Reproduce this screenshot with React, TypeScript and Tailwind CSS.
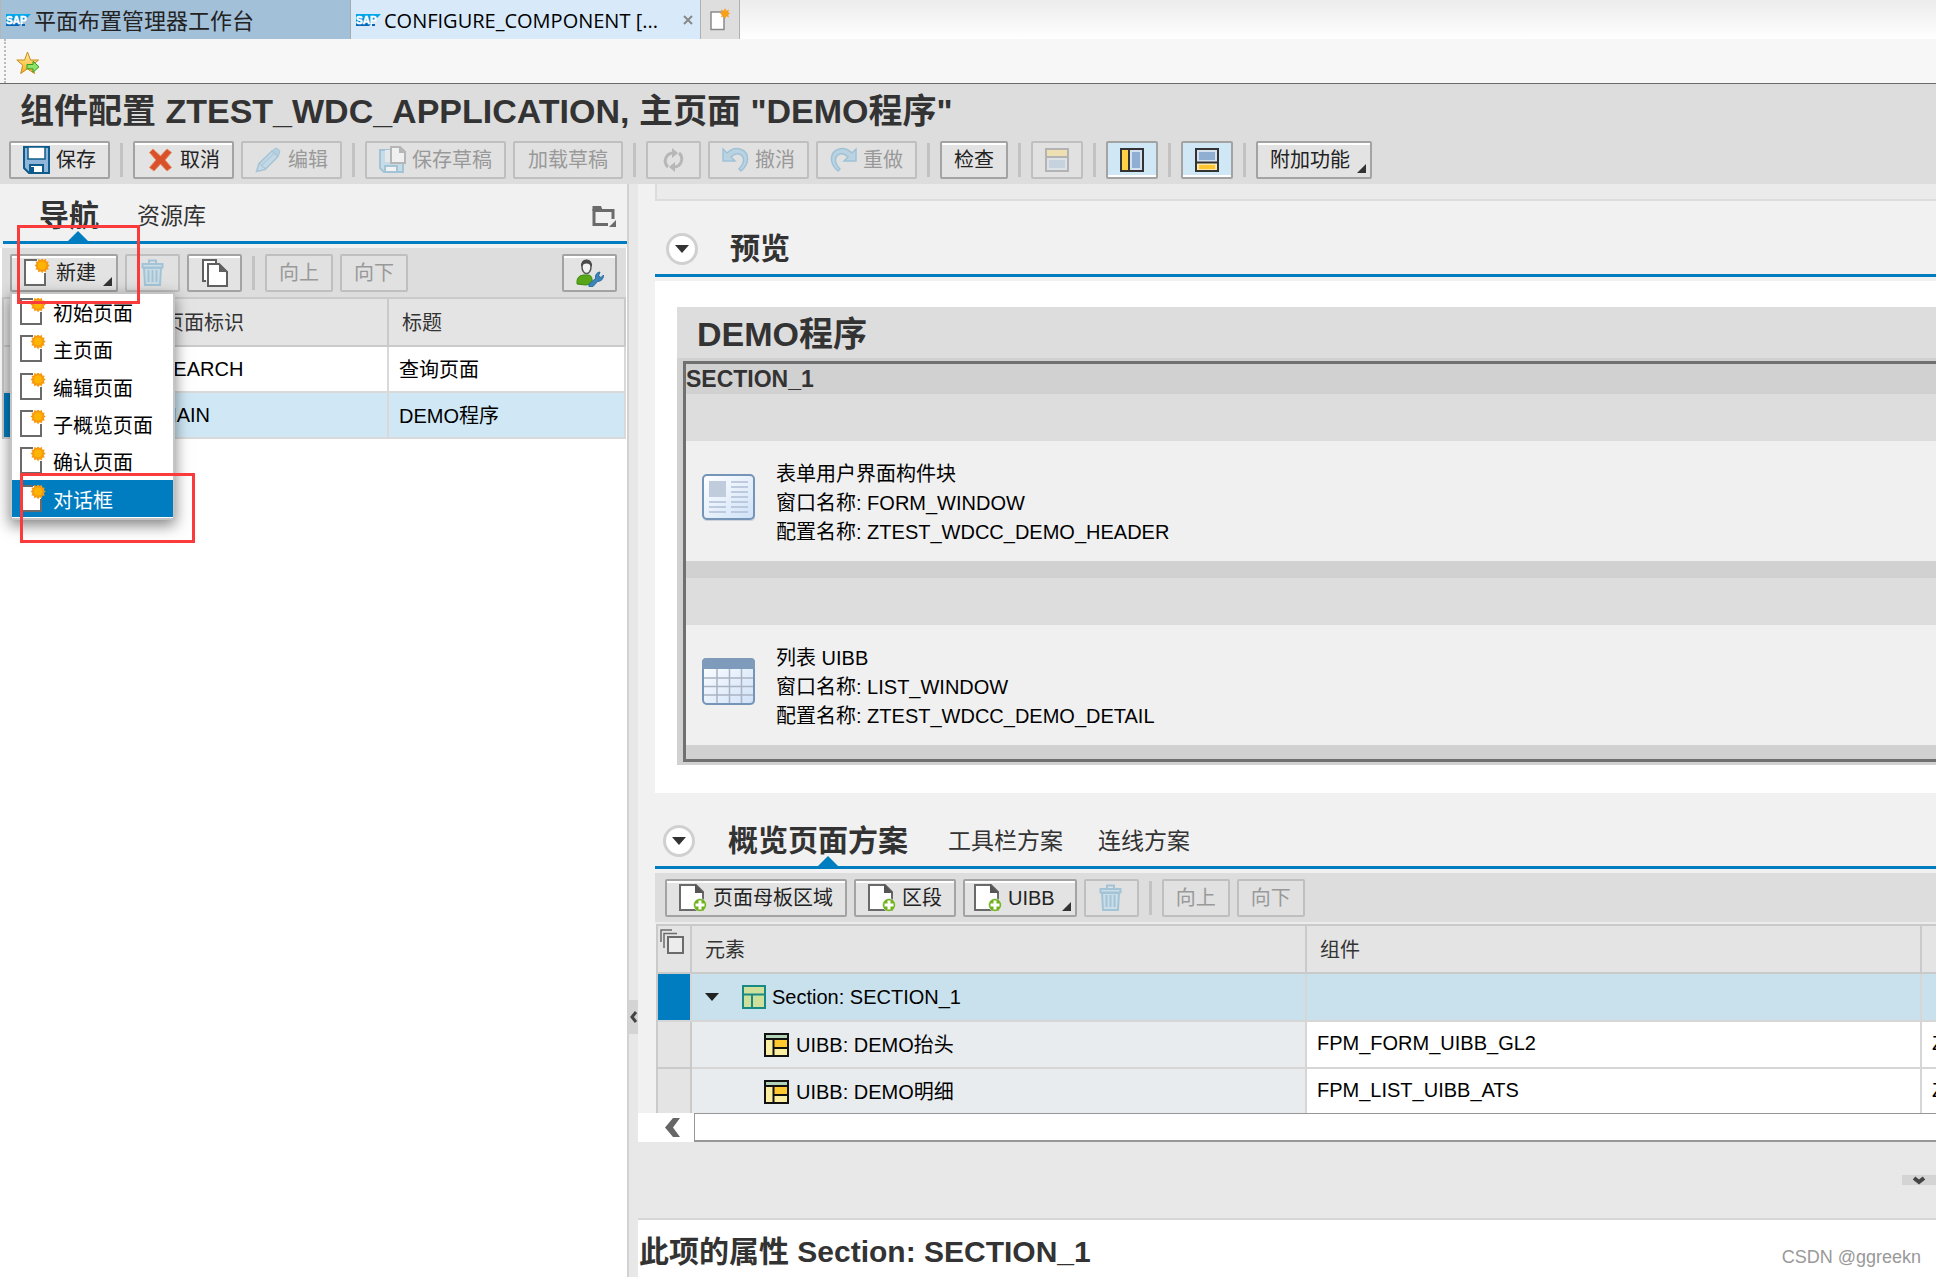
import type { ReactNode } from 'react'
import clsx from 'clsx'

type IconProps = { className?: string }

function SapLogo() {
  return (
    <svg width="25" height="12" viewBox="0 0 25 12" className="shrink-0">
      <defs>
        <linearGradient id="sap" x1="0" y1="0" x2="0" y2="1">
          <stop offset="0" stopColor="#00aeef" />
          <stop offset="1" stopColor="#0a62b5" />
        </linearGradient>
      </defs>
      <path d="M0 0h25L13 12H0z" fill="url(#sap)" />
      <text
        x="0"
        y="10"
        fontSize="10"
        fontWeight="bold"
        fontFamily="Liberation Sans"
        fill="#fff"
        stroke="#fff"
        strokeWidth=".6"
      >
        SAP
      </text>
      <path d="M16 10h3v2h-3z" fill="#0a62b5" />
    </svg>
  )
}

function Spark() {
  return (
    <>
      <path
        d="M18 0l1.600 2 2.400-1 .4 2.600 2.600.4-1 2.400 2 1.600-2 1.600 1 2.400-2.600.4-.4 2.600-2.400-1-1.600 2-1.600-2-2.400 1-.4-2.600-2.600-.4 1-2.400-2-1.600 2-1.600-1-2.400 2.600-.4.4-2.600 2.400 1z"
        fill="#f59a12"
        transform="translate(1 -1) scale(.95)"
      />
      <circle cx="18" cy="6.500" r="4" fill="#ffb400" />
    </>
  )
}

function NewDocIcon({ className }: IconProps) {
  return (
    <svg width="26" height="28" viewBox="0 0 26 28" className={className}>
      <path d="M1 1h20v25H1z" fill="#fff" />
      <path d="M13 1H1v25h20V14" fill="none" stroke="#6a6a6a" strokeWidth="2" />
      <Spark />
    </svg>
  )
}

function NewTabIcon() {
  return (
    <svg width="20" height="23" viewBox="0 0 20 23">
      <path d="M1 4h13v17.500H1z" fill="#fff" stroke="#8a8a8a" strokeWidth="1.500" />
      <path
        d="M15 0l1.300 2.700L19 1.500l-.8 2.700L20 5.500l-1.800 1.300.8 2.700-2.700-1.200L15 11l-1.300-2.700L11 9.500l.8-2.700L10 5.500l1.800-1.300L11 1.500l2.700 1.200z"
        fill="#f7a01b"
      />
    </svg>
  )
}

function StarIcon() {
  return (
    <svg width="24" height="24" viewBox="0 0 24 24">
      <defs>
        <linearGradient id="star" x1="0" y1="0" x2="0" y2="1">
          <stop offset="0" stopColor="#fff0a0" />
          <stop offset="1" stopColor="#f5ae1c" />
        </linearGradient>
      </defs>
      <path
        d="M11.500 1l3 8H22.500l-6.200 5.300 2.200 8.200-7-4.700-6.800 4.700 2-8.200L.8 9h7.800z"
        fill="url(#star)"
        stroke="#c98a1e"
        strokeLinejoin="round"
      />
      <path d="M11 13.500h6v-3.200l6 5.500-6 5.500v-3.500h-6z" fill="#8fe36a" stroke="#2f9e1f" />
    </svg>
  )
}

function SaveIcon() {
  return (
    <svg width="27" height="28" viewBox="0 0 27 28">
      <path d="M1 1h25v26H6l-5-5z" fill="#8fb5d8" stroke="#0f5c8c" strokeWidth="2" />
      <path d="M5 1h17v12H5z" fill="#fff" stroke="#0f5c8c" strokeWidth="1.500" />
      <path d="M7 19h13v8H7z" fill="#fff" stroke="#0f5c8c" strokeWidth="2" />
      <path d="M7 21h4v6H7z" fill="#0f5c8c" />
    </svg>
  )
}

function SaveDraftIcon() {
  return (
    <svg width="27" height="28" viewBox="0 0 27 28">
      <path d="M1 4h23v22H5l-4-4z" fill="#c6dbe6" stroke="#a3c3d6" strokeWidth="2" />
      <path d="M6 4h14v12H6z" fill="#e4e8ea" />
      <path d="M6 20h12v6H6z" fill="#f2f2f2" stroke="#a3c3d6" strokeWidth="2" />
      <path d="M12 1h9l5 5v11H12z" fill="#f0f0f0" stroke="#b5b5b5" strokeWidth="2" />
      <path d="M20 1v6h6z" fill="#b5b5b5" />
    </svg>
  )
}

function CancelIcon() {
  return (
    <svg width="27" height="26" viewBox="0 0 27 26">
      <path
        d="M6 2l7.500 7L20 2l4.500 3.500-6.500 7.500 6.500 7.500L20 24l-6.500-7L7 24l-4.500-3.500L9 13 2.500 5.500z"
        fill="#d9502a"
        stroke="#e38a60"
        strokeWidth="1"
      />
    </svg>
  )
}

function PencilIcon() {
  return (
    <svg width="27" height="26" viewBox="0 0 27 26">
      <path d="M1.500 24.500l2.500-8L17 4l6 5.500-13 13z" fill="#c3d9e5" stroke="#a6c4d6" strokeWidth="1.500" />
      <path d="M17 4l2.500-2.300q2-1.200 4 .6t1 4L23 9.500z" fill="#b4cfde" stroke="#a6c4d6" />
      <path d="M4 16.500q3 .5 3 3 3 0 3 3" fill="none" stroke="#a6c4d6" />
      <path d="M7 18L19 6.500" stroke="#b4cfde" strokeWidth="2" />
    </svg>
  )
}

function RefreshIcon() {
  return (
    <svg width="27" height="26" viewBox="0 0 27 26" fill="none" stroke="#b7b7b7" strokeWidth="3">
      <path d="M8 20a8 8 0 0 1 5-14" />
      <path d="M19 6a8 8 0 0 1-5 14" />
      <path d="M12 1l6 5-6 5z" fill="#b7b7b7" stroke="none" />
      <path d="M15 15l-6 5 6 5z" fill="#b7b7b7" stroke="none" />
    </svg>
  )
}

function UndoIcon({ className }: IconProps) {
  return (
    <svg width="27" height="26" viewBox="0 0 27 26" className={className}>
      <path
        d="M1 2v12h12l-4-4q4-4 8-3 5 1.500 4.500 7-.5 4-4.500 8l2 2q6-5 6.500-11Q26 4 18 2 11 0 5 6z"
        fill="#b9d3e2"
        stroke="#a0c2d6"
        strokeWidth="1.500"
      />
    </svg>
  )
}

function TrashIcon() {
  return (
    <svg width="24" height="28" viewBox="0 0 24 28" fill="#cbdde6" stroke="#a3c4d7" strokeWidth="2">
      <path d="M8 5V1.500h7V5" fill="none" />
      <path d="M1.500 5h20v3.500h-20z" />
      <path d="M3 9h17l-1 17H4z" />
      <path d="M7.500 11v12M11.500 11v12M15.500 11v12" fill="none" />
    </svg>
  )
}

function CopyIcon() {
  return (
    <svg width="26" height="28" viewBox="0 0 26 28" fill="#fff" stroke="#5f5f5f" strokeWidth="2">
      <path d="M4 22H1V1h13v3" />
      <path d="M6 5h11l8 8v14H6z" />
      <path d="M17 4v9h9z" fill="#5f5f5f" stroke="none" />
    </svg>
  )
}

function PersonIcon() {
  return (
    <svg width="28" height="28" viewBox="0 0 28 28">
      <path d="M1 25q-1-8 6-9h6q4 1 3 9-6 2-15 0z" fill="#58a618" stroke="#3f8a10" />
      <ellipse cx="10.500" cy="8" rx="4.500" ry="6.500" fill="#f2f2f2" stroke="#555" strokeWidth="1.500" />
      <path d="M5 8q-.5-7.500 5.500-7.500T16 8q-2-3.500-5.500-3.500T5 8z" fill="#4a4a4a" />
      <path
        d="M13 25l6.500-5.500q-.5-6 4.500-6.500l-1.500 4 2.500 1.500 2.500-2.500q0 6-6 6.500L17 27.500l-4 .2z"
        fill="#3d84b8"
        stroke="#2a6da0"
      />
    </svg>
  )
}

function FolderIcon() {
  return (
    <svg width="25" height="23" viewBox="0 0 25 23">
      <path d="M16 19.500H2V5.500h19V14" fill="none" stroke="#6b6b6b" strokeWidth="3" />
      <path d="M.5 1H9l2 5H.5z" fill="#6b6b6b" />
      <path d="M24 15v7h-7z" fill="#6b6b6b" />
    </svg>
  )
}

function AddDocIcon() {
  return (
    <svg width="28" height="28" viewBox="0 0 28 28">
      <path d="M1 1h16l7 7v18H1z" fill="#fff" stroke="#6a6a6a" strokeWidth="2" />
      <path d="M16 0v9h9z" fill="#555" />
      <circle cx="21" cy="21" r="6.500" fill="#6fb01c" stroke="#fff" strokeWidth=".5" />
      <path d="M21 16.500v9M16.500 21h9" stroke="#fff" strokeWidth="3" />
    </svg>
  )
}

function SplitIcon({ variant }: { variant: 'rows' | 'columns' | 'bottom' }) {
  if (variant === 'columns') {
    return (
      <svg width="24" height="24" viewBox="0 0 24 24" stroke="#333" strokeWidth="2">
        <path d="M1 1h22v22H1z" fill="#d5e1ef" />
        <path d="M1 1h8v22H1z" fill="#ffcf45" />
        <path d="M12 4h8v16h-8z" fill="#8faed1" stroke="none" />
      </svg>
    )
  }
  if (variant === 'bottom') {
    return (
      <svg width="24" height="24" viewBox="0 0 24 24" stroke="#333" strokeWidth="2">
        <path d="M1 1h22v22H1z" fill="#d5e1ef" />
        <path d="M4 4h16v8H4z" fill="#8faed1" stroke="none" />
        <path d="M1 14.500h22V23H1z" fill="#ffe9a8" />
        <path d="M4 17h16v4H4z" fill="#ffc52e" stroke="none" />
      </svg>
    )
  }
  return (
    <svg width="24" height="24" viewBox="0 0 24 24" stroke="#b3b3b3" strokeWidth="2">
      <path d="M1 1h22v22H1z" fill="#dde2e7" />
      <path d="M1 1h22v8H1z" fill="#efe0b4" />
      <path d="M4 12h16v8H4z" fill="#c6d2de" stroke="none" />
    </svg>
  )
}

function FormIcon() {
  return (
    <svg width="54" height="48" viewBox="0 0 54 48">
      <defs>
        <linearGradient id="sheet" x1="0" y1="0" x2="1" y2="1">
          <stop offset="0" stopColor="#fff" />
          <stop offset="1" stopColor="#cfe1f8" />
        </linearGradient>
      </defs>
      <rect x="1" y="3" width="52" height="44" rx="4" fill="#cfd3d8" />
      <rect x="1" y="1" width="51" height="44" rx="4" fill="url(#sheet)" stroke="#7494b8" strokeWidth="2" />
      <path d="M7 7h17v16H7z" fill="#c0cbdc" />
      <path
        d="M29 8h17M29 13h17M29 18h17M29 23h17M29 28h17M29 33h17M29 38h17M7 28h17M7 33h17M7 38h17"
        stroke="#b0bfd4"
        strokeWidth="1.500"
      />
    </svg>
  )
}

function GridIcon() {
  return (
    <svg width="54" height="48" viewBox="0 0 54 48">
      <rect x="1" y="3" width="52" height="44" rx="4" fill="#cfd3d8" />
      <rect x="1" y="1" width="51" height="45" rx="4" fill="url(#sheet)" stroke="#7494b8" strokeWidth="2" />
      <path d="M0 11V4q0-4 4-4h45q4 0 4 4v7z" fill="#7f9bbb" />
      <path d="M2 20h49M2 28.500h49M2 37h49M15 11v34M27.500 11v34M39.500 11v34" stroke="#a9b3c2" strokeWidth="1.500" />
    </svg>
  )
}

function SectionIcon() {
  return (
    <svg width="24" height="24" viewBox="0 0 24 24" className="shrink-0">
      <path d="M1 1h22v22H1zM1 9.500h22M10 9.500V23" fill="#cfe09c" stroke="#178a84" strokeWidth="2" />
    </svg>
  )
}

function UibbIcon() {
  return (
    <svg width="25" height="24" viewBox="0 0 25 24" className="shrink-0">
      <path d="M1 1h23v22H1z" fill="#fbeea0" stroke="#111" strokeWidth="2" />
      <path d="M2 2h21v3H2z" fill="#b3d3b8" />
      <path d="M10 7h13v7H10z" fill="#ffc82e" />
      <path d="M1 6h23M9.500 6v17M9.500 15H24" stroke="#111" strokeWidth="2" />
    </svg>
  )
}

function SelectAllIcon() {
  return (
    <svg width="25" height="25" viewBox="0 0 25 25" fill="none" stroke="#6b6b6b" strokeWidth="2">
      <path d="M8 8h15v16H8z" fill="#ececec" />
      <path d="M4 19V4.500h13" strokeWidth="1.500" />
      <path d="M1 13V1h11" strokeWidth="1.500" />
    </svg>
  )
}

function ToggleButton({ label }: { label: string }) {
  return (
    <button
      aria-label={label}
      className="flex size-8 items-center justify-center rounded-full border-3 border-[#d0d0d0] bg-white"
    >
      <svg width="14" height="8" viewBox="0 0 14 8">
        <path d="M0 0h14L7 8z" fill="#333" />
      </svg>
    </button>
  )
}

type ToolButtonProps = {
  children: ReactNode
  disabled?: boolean
  active?: boolean
  menu?: boolean
  label?: string
  className?: string
}

function ToolButton({ children, disabled, active, menu, label, className }: ToolButtonProps) {
  return (
    <button
      disabled={disabled}
      aria-label={label}
      className={clsx(
        'relative flex h-[38px] shrink-0 items-center justify-center gap-[6px] rounded-xs border-2 whitespace-nowrap',
        disabled
          ? 'border-[#bfbfbf] bg-[#e1e1e1] text-[#999]'
          : 'border-[#a3a3a3] text-[#222]',
        !disabled && !active && 'bg-[#e3e3e3] shadow-[inset_0_2px_0_#fff]',
        active && 'bg-[#d0e8f5] shadow-[inset_0_-2px_0_#fff]',
        className ?? 'px-3',
      )}
    >
      {children}
      {menu && (
        <svg width="9" height="9" viewBox="0 0 9 9" className="absolute right-1 bottom-1">
          <path d="M9 0v9H0z" fill="#333" />
        </svg>
      )}
    </button>
  )
}

function Separator() {
  return <span className="mx-[3px] h-[34px] w-[3px] shrink-0 bg-[#c2c2c2]" />
}

function TabPointer() {
  return (
    <svg width="20" height="10" viewBox="0 0 20 10" className="absolute bottom-0 left-1/2 -translate-x-1/2">
      <path d="M10 0l10 10H0z" fill="#007cc0" />
    </svg>
  )
}

const menuItems = ['初始页面', '主页面', '编辑页面', '子概览页面', '确认页面', '对话框']

function NewMenu() {
  return (
    <ul
      role="menu"
      className="absolute top-[38px] left-0 z-10 flex h-[228px] w-[165px] flex-col border-2 border-[#c4c4c4] bg-white text-black shadow-[0_5px_14px_rgba(0,0,0,0.5)]"
    >
      {menuItems.map((item, i) => (
        <li key={item} role="none" className="flex flex-1">
          <button
            role="menuitem"
            className={clsx(
              'flex flex-1 items-center gap-[7px] pl-2 text-left',
              i === menuItems.length - 1 && 'bg-[#007cc0] text-white',
            )}
          >
            <NewDocIcon />
            <span className="pt-1">{item}</span>
          </button>
        </li>
      ))}
    </ul>
  )
}

function BrowserTabs() {
  return (
    <div className="flex h-[39px] bg-linear-to-b from-[#ececec] to-white font-['Open_Sans','Noto_Sans_CJK_SC',sans-serif] text-[20px]">
      <button className="flex w-[350px] items-center gap-[3px] border-l border-[#b5b5b5] bg-[#a3c0d9] pl-[5px] text-[22px] text-[#222]">
        <SapLogo />
        <span>平面布置管理器工作台</span>
      </button>
      <div className="flex w-[350px] items-center border-l border-[#aaa] bg-[#d8eafa]">
        <button className="flex items-center gap-[3px] pl-[5px] text-black">
          <SapLogo />
          <span className="pt-[2px] whitespace-nowrap">CONFIGURE_COMPONENT [...</span>
        </button>
        <button aria-label="关闭" className="mr-[7px] ml-auto">
          <svg width="10" height="10" viewBox="0 0 10 10">
            <path d="M1 1l8 8M9 1L1 9" stroke="#888" strokeWidth="2" />
          </svg>
        </button>
      </div>
      <button aria-label="新标签页" className="flex w-[40px] items-center justify-center border-x border-[#b0b0b0] bg-[#dedede]">
        <NewTabIcon />
      </button>
    </div>
  )
}

function AppHeader() {
  return (
    <header className="border-t border-[#6a6a6a] bg-[#ddd] pb-[5px]">
      <h1 className="flex h-[57px] items-center pb-1 pl-5 text-[34px] leading-none font-bold whitespace-nowrap">
        组件配置 ZTEST_WDC_APPLICATION, 主页面 "DEMO程序"
      </h1>
      <div className="flex items-center gap-[7px] pl-[9px]">
        <ToolButton>
          <SaveIcon />
          保存
        </ToolButton>
        <Separator />
        <ToolButton>
          <CancelIcon />
          取消
        </ToolButton>
        <ToolButton disabled>
          <PencilIcon />
          编辑
        </ToolButton>
        <Separator />
        <ToolButton disabled>
          <SaveDraftIcon />
          保存草稿
        </ToolButton>
        <ToolButton disabled className="px-[13px]">
          加载草稿
        </ToolButton>
        <Separator />
        <ToolButton disabled label="刷新" className="w-[55px]">
          <RefreshIcon />
        </ToolButton>
        <ToolButton disabled>
          <UndoIcon />
          撤消
        </ToolButton>
        <ToolButton disabled>
          <UndoIcon className="-scale-x-100" />
          重做
        </ToolButton>
        <Separator />
        <ToolButton>检查</ToolButton>
        <Separator />
        <ToolButton disabled label="上方面板">
          <SplitIcon variant="rows" />
        </ToolButton>
        <Separator />
        <ToolButton active label="左侧面板">
          <SplitIcon variant="columns" />
        </ToolButton>
        <Separator />
        <ToolButton active label="下方面板">
          <SplitIcon variant="bottom" />
        </ToolButton>
        <Separator />
        <ToolButton menu className="pr-5 pl-3">
          附加功能
        </ToolButton>
      </div>
    </header>
  )
}

const pages = [
  { id: 'SEARCH', title: '查询页面', selected: false },
  { id: 'MAIN', title: 'DEMO程序', selected: true },
]

function NavigationPanel() {
  return (
    <aside className="relative w-[629px] shrink-0 border-r-2 border-[#d2d2d2] bg-white">
      <div className="bg-[#f1f1f1] pb-1 pl-[3px]">
        <div className="flex h-[60px] items-center border-b-3 border-[#007cc0] pr-[10px] pl-9">
          <button className="relative flex h-full items-center pt-[6px] text-[30px] font-bold">
            导航
            <span className="absolute inset-x-0 bottom-0 ml-[18px]">
              <TabPointer />
            </span>
          </button>
          <button className="ml-[38px] pt-[6px] text-[23px]">资源库</button>
          <button aria-label="面板选项" className="ml-auto pt-2">
            <FolderIcon />
          </button>
        </div>
      </div>
      <div className="mr-px ml-[2px]">
        <div className="flex h-[49px] items-center gap-[7px] bg-[#ddd] pr-[9px] pl-2">
          <div className="relative">
            <ToolButton menu className="pr-5 pl-3">
              <NewDocIcon />
              新建
            </ToolButton>
            <NewMenu />
          </div>
          <ToolButton disabled label="删除" className="w-[55px]">
            <TrashIcon />
          </ToolButton>
          <ToolButton label="复制" className="w-[55px]">
            <CopyIcon />
          </ToolButton>
          <Separator />
          <ToolButton disabled>向上</ToolButton>
          <ToolButton disabled>向下</ToolButton>
          <ToolButton label="个性化" className="ml-auto w-[55px]">
            <PersonIcon />
          </ToolButton>
        </div>
        <table className="w-full table-fixed border-separate border-spacing-0 border-t-2 border-l-2 border-[#cacaca]">
          <colgroup>
            <col className="w-[146px]" />
            <col className="w-[239px]" />
            <col />
          </colgroup>
          <thead>
            <tr className="h-[48px] bg-[#e4e4e4] text-left">
              <th className="border-b-2 border-[#cacaca]" />
              <th className="border-r-2 border-b-2 border-[#cacaca] pt-[2px] pl-[14px] font-normal">页面标识</th>
              <th className="border-r-2 border-b-2 border-[#cacaca] pt-[2px] pl-[13px] font-normal">标题</th>
            </tr>
          </thead>
          <tbody className="text-black">
            {pages.map(page => (
              <tr key={page.id} className={clsx('h-[46px]', page.selected ? 'bg-[#d0e8f5]' : 'bg-white')}>
                <td className={clsx('border-b-2 border-[#d9d9d9]', page.selected ? 'bg-[#007cc0]' : 'bg-[#e4e4e4]')} />
                <td className="border-r-2 border-b-2 border-[#d9d9d9] pl-[10px]">{page.id}</td>
                <td className="border-r-2 border-b-2 border-[#d9d9d9] pt-[2px] pl-[10px]">{page.title}</td>
              </tr>
            ))}
          </tbody>
        </table>
      </div>
      <div className="absolute top-[41px] left-[17px] z-20 h-[79px] w-[123px] border-3 border-[#fb3b3b]" />
      <div className="absolute top-[289px] left-[20px] z-20 h-[70px] w-[175px] border-3 border-[#fb3b3b]" />
    </aside>
  )
}

function PreviewBlock({ icon, lines }: { icon: ReactNode; lines: string[] }) {
  return (
    <>
      <div className="h-[47px] bg-[#ddd]" />
      <div className="flex h-[120px] items-center gap-5 bg-[#f0f0f0] pl-4">
        <div className="pb-[6px]">{icon}</div>
        <div className="pt-1 leading-[29px] text-black">
          {lines.map(line => (
            <p key={line}>{line}</p>
          ))}
        </div>
      </div>
    </>
  )
}

function Preview() {
  return (
    <section className="pl-[17px]">
      <div className="flex h-[76px] items-center gap-8 border-b-3 border-[#007cc0] pt-[23px] pl-[11px]">
        <ToggleButton label="折叠预览" />
        <h2 className="text-[30px] leading-none font-bold">预览</h2>
      </div>
      <div className="mt-1 bg-white pt-[26px] pb-7 pl-[22px]">
        <h3 className="flex h-[51px] items-center bg-[#ddd] pt-[2px] pl-5 text-[34px] leading-none font-bold">DEMO程序</h3>
        <div className="bg-[#d1d1d1] py-[3px] pl-[6px]">
          <div className="border-y-3 border-l-3 border-[#707070]">
            <h4 className="flex h-[30px] items-center text-[23px] leading-none font-bold">
              <span>SECTION_1</span>
            </h4>
            <PreviewBlock
              icon={<FormIcon />}
              lines={['表单用户界面构件块', '窗口名称: FORM_WINDOW', '配置名称: ZTEST_WDCC_DEMO_HEADER']}
            />
            <div className="h-[17px]" />
            <PreviewBlock
              icon={<GridIcon />}
              lines={['列表 UIBB', '窗口名称: LIST_WINDOW', '配置名称: ZTEST_WDCC_DEMO_DETAIL']}
            />
            <div className="h-[14px]" />
          </div>
        </div>
      </div>
    </section>
  )
}

const uibbs = [
  { name: 'UIBB: DEMO抬头', component: 'FPM_FORM_UIBB_GL2' },
  { name: 'UIBB: DEMO明细', component: 'FPM_LIST_UIBB_ATS' },
]

function OverviewSchema() {
  return (
    <section className="pl-[17px]">
      <div className="flex h-[76px] items-center border-b-3 border-[#007cc0] pt-[23px] pl-[8px]">
        <ToggleButton label="折叠方案" />
        <button className="relative ml-[33px] flex h-full items-center text-[30px] font-bold whitespace-nowrap">
          概览页面方案
          <span className="absolute inset-x-0 bottom-0 ml-[20px]">
            <TabPointer />
          </span>
        </button>
        <button className="ml-10 text-[23px] whitespace-nowrap">工具栏方案</button>
        <button className="ml-[35px] text-[23px] whitespace-nowrap">连线方案</button>
      </div>
      <div className="mt-1 flex h-[51px] items-center gap-[7px] border-b-2 border-[#ececec] bg-[#ddd] pl-[10px]">
        <ToolButton>
          <AddDocIcon />
          页面母板区域
        </ToolButton>
        <ToolButton>
          <AddDocIcon />
          区段
        </ToolButton>
        <ToolButton menu className="pr-5 pl-[9px]">
          <AddDocIcon />
          UIBB
        </ToolButton>
        <ToolButton disabled label="删除" className="w-[55px]">
          <TrashIcon />
        </ToolButton>
        <Separator />
        <ToolButton disabled>向上</ToolButton>
        <ToolButton disabled>向下</ToolButton>
      </div>
      <div className="h-[189px] overflow-hidden pl-px">
        <table className="w-full table-fixed border-separate border-spacing-0 border-t-2 border-l-2 border-[#cacaca]">
          <colgroup>
            <col className="w-[34px]" />
            <col className="w-[615px]" />
            <col className="w-[615px]" />
            <col />
          </colgroup>
          <thead>
            <tr className="h-[48px] bg-[#e4e4e4] text-left">
              <th className="border-r-2 border-b-2 border-[#cacaca] pt-[3px] pl-[2px] align-top">
                <SelectAllIcon />
              </th>
              <th className="border-r-2 border-b-2 border-[#cacaca] pt-[2px] pl-[13px] font-normal">元素</th>
              <th className="border-r-2 border-b-2 border-[#cacaca] pt-[2px] pl-[13px] font-normal">组件</th>
              <th className="border-b-2 border-[#cacaca]" />
            </tr>
          </thead>
          <tbody className="text-black">
            <tr className="h-[48px] bg-[#c9e0ed]">
              <td className="border-r-2 border-b-2 border-[#d6d6d6] bg-[#007cc0]" />
              <td className="border-r-2 border-b-2 border-[#d6d6d6] pl-[13px]">
                <div className="flex items-center">
                  <button aria-label="展开">
                    <svg width="14" height="8" viewBox="0 0 14 8">
                      <path d="M0 0h14L7 8z" fill="#222" />
                    </svg>
                  </button>
                  <span className="ml-[23px] flex items-center gap-[6px]">
                    <SectionIcon />
                    Section: SECTION_1
                  </span>
                </div>
              </td>
              <td className="border-r-2 border-b-2 border-[#d6d6d6]" />
              <td className="border-b-2 border-[#d6d6d6]" />
            </tr>
            {uibbs.map(uibb => (
              <tr key={uibb.name} className="h-[47px] bg-white">
                <td className="border-r-2 border-b-2 border-[#cacaca] bg-[#e4e4e4]" />
                <td className="border-r-2 border-b-2 border-[#d6d6d6] bg-[#e8ecef] pl-[72px]">
                  <div className="flex items-center gap-[7px]">
                    <UibbIcon />
                    {uibb.name}
                  </div>
                </td>
                <td className="border-r-2 border-b-2 border-[#d6d6d6] pb-1 pl-[10px]">{uibb.component}</td>
                <td className="overflow-hidden border-b-2 border-[#d6d6d6] pb-1 pl-[10px] whitespace-nowrap">Z</td>
              </tr>
            ))}
          </tbody>
        </table>
      </div>
    </section>
  )
}

function HorizontalScroll() {
  return (
    <div className="flex h-[29px] bg-white">
      <button aria-label="向左滚动" className="flex w-14 items-center justify-end pr-[13px]">
        <svg width="16" height="19" viewBox="0 0 16 19">
          <path d="M8 0h7L8 9.500 15 19H8L0 9.500z" fill="#666" />
        </svg>
      </button>
      <div className="flex-1 border-t border-b-2 border-l border-[#979797]" />
    </div>
  )
}

export default function App() {
  return (
    <div className="flex min-h-screen flex-col overflow-hidden bg-white font-['Liberation_Sans','Noto_Sans_CJK_SC',sans-serif] text-[20px] leading-7 text-[#333]">
      <BrowserTabs />
      <div className="flex h-[44px] items-center bg-[#f7f7f7] pl-1">
        <div className="h-full border-l-2 border-dotted border-[#bbb]" />
        <button aria-label="收藏" className="ml-[10px] pt-1">
          <StarIcon />
        </button>
      </div>
      <AppHeader />
      <div className="flex flex-1">
        <NavigationPanel />
        <div className="w-[9px] shrink-0 bg-[#e8e8e8] pt-[816px]">
          <button aria-label="收起导航" className="flex h-[34px] w-full items-center justify-center bg-[#d4d4d4]">
            <svg width="9" height="12" viewBox="0 0 9 12">
              <path d="M7 1L3 6l4 5" fill="none" stroke="#444" strokeWidth="3" />
            </svg>
          </button>
        </div>
        <main className="relative flex min-w-0 flex-1 flex-col bg-[#f1f1f1]">
          <div className="ml-[17px] h-[17px] border-b-2 border-l-2 border-[#dcdcdc] bg-[#ebebeb]" />
          <Preview />
          <OverviewSchema />
          <HorizontalScroll />
          <div className="flex h-[78px] justify-end border-b-2 border-[#d6d6d6] bg-[#e8e8e8] pt-[33px]">
            <button aria-label="收起属性" className="flex h-[10px] w-[34px] items-center justify-center bg-[#d4d4d4]">
              <svg width="12" height="9" viewBox="0 0 12 9">
                <path d="M1 2l5 4 5-4" fill="none" stroke="#444" strokeWidth="4" />
              </svg>
            </button>
          </div>
          <section className="flex flex-1 items-start justify-between bg-white pt-[14px] pr-[15px] pl-px">
            <h2 className="text-[30px] leading-9 font-bold whitespace-nowrap">此项的属性 Section: SECTION_1</h2>
            <span className="pt-[9px] text-[18px] text-[#999]">CSDN @ggreekn</span>
          </section>
        </main>
      </div>
    </div>
  )
}
